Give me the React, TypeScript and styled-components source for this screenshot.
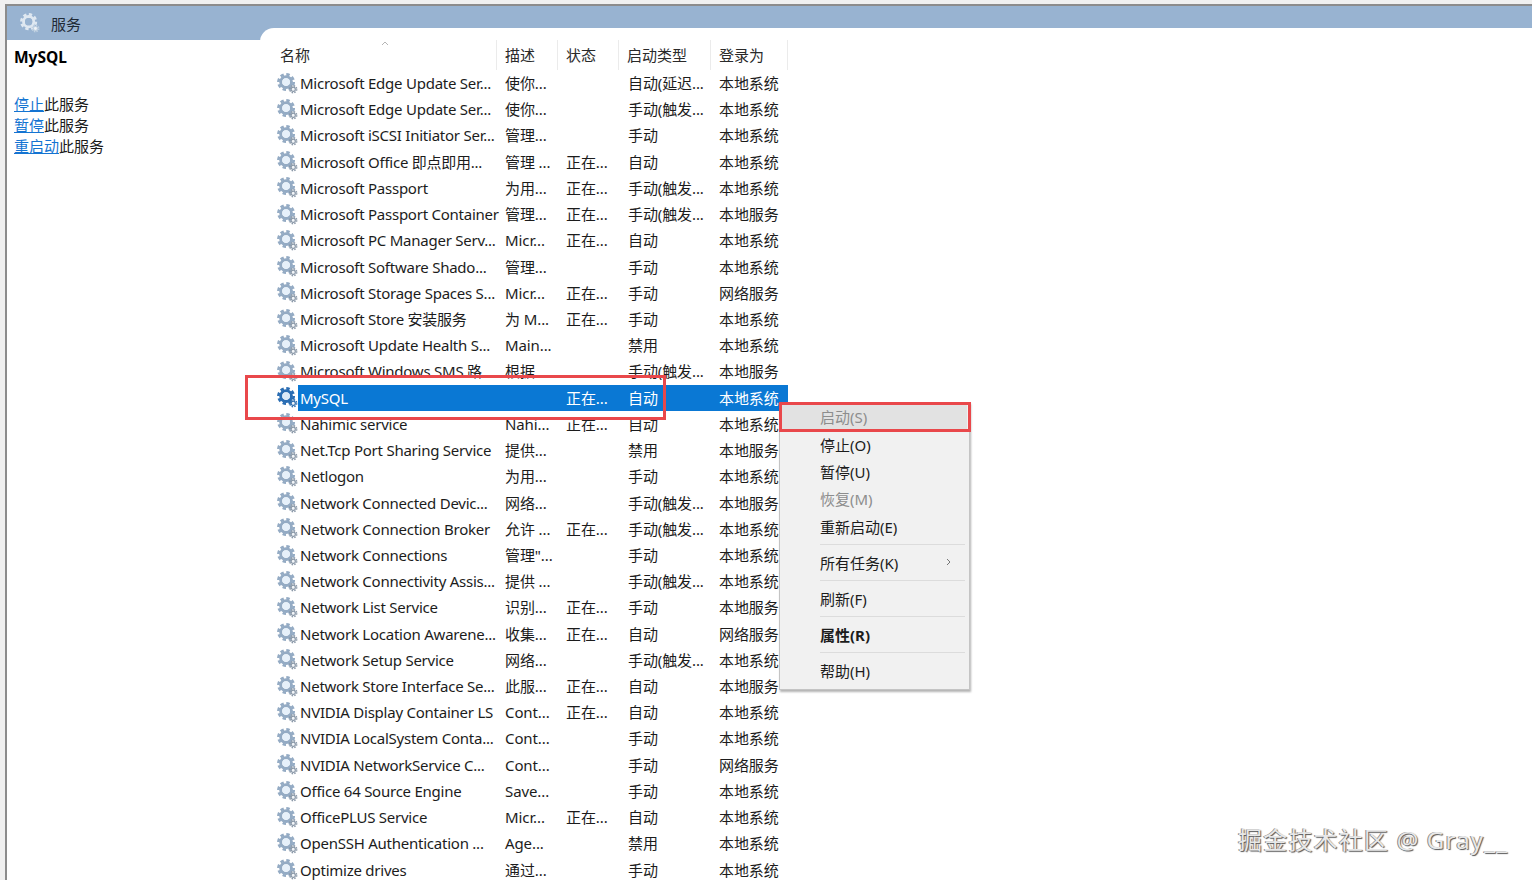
import React, { FC } from 'react';
import styled, { createGlobalStyle } from 'styled-components';

const GlobalStyle = createGlobalStyle`
  html, body {
    margin: 0;
    height: 100%;
    overflow: hidden;
    background: #f0f0f0;
    font-family: "Noto Sans", "Noto Sans CJK SC", sans-serif;
  }
`;

const Page = styled.div`
  position: relative;
  width: 1532px;
  height: 880px;
  overflow: hidden;
  padding: 4px 0 0 5px;
  box-sizing: border-box;
`;

const Win = styled.div`
  height: 876px;
  border-top: 2px solid #8c8c8c;
  border-left: 2px solid #8c8c8c;
  background: #fff;
  box-sizing: border-box;
`;

const TitleBar = styled.div`
  display: flex;
  align-items: center;
  height: 34px;
  padding: 0 0 0 13px;
  gap: 11px;
  background: #98b3d1;
  color: #1f2a36;
  font-size: 15px;
`;

const Body = styled.div`
  display: flex;
`;

const Sidebar = styled.div`
  width: 253px;
  flex: none;
  padding: 6px 0 0 7px;
  box-sizing: border-box;
  color: #1a1a1a;
`;

const ServiceName = styled.div`
  font-size: 15.5px;
  font-weight: 700;
  line-height: 22px;
  color: #000;
  margin-bottom: 26px;
`;

const ActionLine = styled.div`
  font-size: 15px;
  line-height: 21px;
`;

const ActionLink = styled.a`
  color: #1474d2;
  text-decoration: underline;
`;

const Panel = styled.div`
  flex: 1;
  margin-top: -12px;
  padding: 12px 0 0 17px;
  background: #fff;
  border-top-left-radius: 14px;
  position: relative;
`;

const COLUMNS = '220px 61px 61px 92px 77px';

const HeaderRow = styled.div`
  display: grid;
  grid-template-columns: ${COLUMNS};
  width: 511px;
  height: 30px;
`;

const HeaderCell = styled.div<{ $pad: number }>`
  position: relative;
  padding-left: ${p => p.$pad}px;
  border-right: 1px solid #ebebeb;
  font-size: 15px;
  line-height: 30px;
  color: #2a2a2a;
`;

const SortArrow = styled.svg`
  position: absolute;
  left: 104px;
  top: 1px;
`;

const Row = styled.div`
  display: grid;
  grid-template-columns: ${COLUMNS};
  width: 511px;
  height: 26.23px;
  font-size: 15px;
  line-height: 26.1px;
  color: #1c1c1c;
  white-space: nowrap;
`;

const NameCell = styled.div`
  display: flex;
  align-items: center;
  min-width: 0;
`;

const NameText = styled.div<{ $selected: boolean }>`
  flex: 1;
  min-width: 0;
  height: 100%;
  padding-left: 2px;
  letter-spacing: -0.24px;
  background: ${p => (p.$selected ? '#0a78d4' : 'transparent')};
  color: ${p => (p.$selected ? '#fff' : 'inherit')};
`;

const Cell = styled.div<{ $selected: boolean; $pad: number }>`
  padding-left: ${p => p.$pad}px;
  letter-spacing: -0.1px;
  background: ${p => (p.$selected ? '#0a78d4' : 'transparent')};
  color: ${p => (p.$selected ? '#fff' : 'inherit')};
`;

const RedBox = styled.div<{ $left: number; $top: number; $w: number; $h: number }>`
  position: absolute;
  left: ${p => p.$left}px;
  top: ${p => p.$top}px;
  width: ${p => p.$w}px;
  height: ${p => p.$h}px;
  border: 3px solid #e9484b;
  box-sizing: border-box;
  z-index: 3;
`;

const Menu = styled.div`
  position: absolute;
  left: 779px;
  top: 402px;
  width: 191px;
  height: 288px;
  padding: 0 2px;
  box-sizing: border-box;
  background: #f1f1f1;
  border: 1px solid #c4c4c4;
  box-shadow: 1px 2px 2px rgba(0, 0, 0, 0.3);
  z-index: 2;
`;

const MenuItem = styled.div<{ $disabled?: boolean; $active?: boolean; $bold?: boolean }>`
  display: flex;
  align-items: center;
  justify-content: space-between;
  height: 27.4px;
  padding: 0 16px 0 38px;
  font-size: 15px;
  font-weight: ${p => (p.$bold ? 700 : 400)};
  color: ${p => (p.$disabled ? '#8d8d8d' : '#1c1c1c')};
  background: ${p => (p.$active ? '#e2e2e2' : 'transparent')};
`;

const MenuSep = styled.div`
  height: 1px;
  margin: 4px 2px 3.7px 38px;
  background: #dcdcdc;
`;

const Chevron = styled.svg`
  flex: none;
`;

const Watermark = styled.div`
  position: absolute;
  right: 24px;
  bottom: 24px;
  font-size: 24px;
  line-height: 32px;
  letter-spacing: 1.2px;
  color: #e8e8e8;
  text-shadow: 1px 1px 1px #555, -1px 0 0 #8a8a8a;
  z-index: 4;
  white-space: nowrap;
`;

const GearSvg = styled.svg`
  flex: none;
`;

const Gear: FC<{ tone: 'normal' | 'selected' | 'title'; size: number }> = ({ tone, size }) => {
  const main = tone === 'selected' ? '#2a6db3' : tone === 'title' ? '#dfe8f1' : '#94abc4';
  const small = tone === 'selected' ? '#2f6fae' : tone === 'title' ? '#c2d2e2' : '#8a98a8';
  const hole = tone === 'selected' ? '#dbe9f7' : tone === 'title' ? '#98b3d1' : '#e6f0fa';
  return (
    <GearSvg width={size} height={size} viewBox="0 0 22 22">
      <circle cx="9.5" cy="9.5" r="8" fill="none" stroke={main} strokeWidth="2.8" strokeDasharray="3.6 2.68" />
      <circle cx="9.5" cy="9.5" r="5.6" fill="none" stroke={main} strokeWidth="3.2" />
      <circle cx="9.5" cy="9.5" r="4" fill={hole} />
      <circle cx="17" cy="17" r="3.6" fill="none" stroke={small} strokeWidth="1.6" strokeDasharray="1.6 1.23" />
      <circle cx="17" cy="17" r="2.2" fill="#f2f5f8" stroke={small} strokeWidth="1.2" />
    </GearSvg>
  );
};

type Service = [string, string, string, string, string];

const services: Service[] = [
  ['Microsoft Edge Update Ser...', '使你...', '', '自动(延迟...', '本地系统'],
  ['Microsoft Edge Update Ser...', '使你...', '', '手动(触发...', '本地系统'],
  ['Microsoft iSCSI Initiator Ser...', '管理...', '', '手动', '本地系统'],
  ['Microsoft Office 即点即用...', '管理 ...', '正在...', '自动', '本地系统'],
  ['Microsoft Passport', '为用...', '正在...', '手动(触发...', '本地系统'],
  ['Microsoft Passport Container', '管理...', '正在...', '手动(触发...', '本地服务'],
  ['Microsoft PC Manager Serv...', 'Micr...', '正在...', '自动', '本地系统'],
  ['Microsoft Software Shado...', '管理...', '', '手动', '本地系统'],
  ['Microsoft Storage Spaces S...', 'Micr...', '正在...', '手动', '网络服务'],
  ['Microsoft Store 安装服务', '为 M...', '正在...', '手动', '本地系统'],
  ['Microsoft Update Health S...', 'Main...', '', '禁用', '本地系统'],
  ['Microsoft Windows SMS 路...', '根据...', '', '手动(触发...', '本地服务'],
  ['MySQL', '', '正在...', '自动', '本地系统'],
  ['Nahimic service', 'Nahi...', '正在...', '自动', '本地系统'],
  ['Net.Tcp Port Sharing Service', '提供...', '', '禁用', '本地服务'],
  ['Netlogon', '为用...', '', '手动', '本地系统'],
  ['Network Connected Devic...', '网络...', '', '手动(触发...', '本地服务'],
  ['Network Connection Broker', '允许 ...', '正在...', '手动(触发...', '本地系统'],
  ['Network Connections', '管理"...', '', '手动', '本地系统'],
  ['Network Connectivity Assis...', '提供 ...', '', '手动(触发...', '本地系统'],
  ['Network List Service', '识别...', '正在...', '手动', '本地服务'],
  ['Network Location Awarene...', '收集...', '正在...', '自动', '网络服务'],
  ['Network Setup Service', '网络...', '', '手动(触发...', '本地系统'],
  ['Network Store Interface Se...', '此服...', '正在...', '自动', '本地服务'],
  ['NVIDIA Display Container LS', 'Cont...', '正在...', '自动', '本地系统'],
  ['NVIDIA LocalSystem Conta...', 'Cont...', '', '手动', '本地系统'],
  ['NVIDIA NetworkService C...', 'Cont...', '', '手动', '网络服务'],
  ['Office 64 Source Engine', 'Save...', '', '手动', '本地系统'],
  ['OfficePLUS Service', 'Micr...', '正在...', '自动', '本地系统'],
  ['OpenSSH Authentication ...', 'Age...', '', '禁用', '本地系统'],
  ['Optimize drives', '通过...', '', '手动', '本地系统'],
];

const App: FC = () => (
  <Page>
    <GlobalStyle />
    <Win>
      <TitleBar>
        <Gear tone="title" size={20} />
        <span>服务</span>
      </TitleBar>
      <Body>
        <Sidebar>
          <ServiceName>MySQL</ServiceName>
          <ActionLine><ActionLink>停止</ActionLink>此服务</ActionLine>
          <ActionLine><ActionLink>暂停</ActionLink>此服务</ActionLine>
          <ActionLine><ActionLink>重启动</ActionLink>此服务</ActionLine>
        </Sidebar>
        <Panel>
          <HeaderRow>
            <HeaderCell $pad={3}>
              名称
              <SortArrow width="8" height="5" viewBox="0 0 8 5">
                <path d="M1 4 L4 1 L7 4" fill="none" stroke="#b5b5b5" strokeWidth="1" />
              </SortArrow>
            </HeaderCell>
            <HeaderCell $pad={8}>描述</HeaderCell>
            <HeaderCell $pad={8}>状态</HeaderCell>
            <HeaderCell $pad={8}>启动类型</HeaderCell>
            <HeaderCell $pad={8}>登录为</HeaderCell>
          </HeaderRow>
          {services.map((s, i) => {
            const selected = s[0] === 'MySQL';
            return (
              <Row key={i}>
                <NameCell>
                  <Gear tone={selected ? 'selected' : 'normal'} size={21} />
                  <NameText $selected={selected}>{s[0]}</NameText>
                </NameCell>
                <Cell $selected={selected} $pad={8}>{s[1]}</Cell>
                <Cell $selected={selected} $pad={8}>{s[2]}</Cell>
                <Cell $selected={selected} $pad={9}>{s[3]}</Cell>
                <Cell $selected={selected} $pad={8}>{s[4]}</Cell>
              </Row>
            );
          })}
        </Panel>
      </Body>
    </Win>
    <RedBox $left={245} $top={375} $w={421} $h={45} />
    <RedBox $left={779} $top={402} $w={192} $h={30} />
    <Menu>
      <MenuItem $disabled $active>启动(S)</MenuItem>
      <MenuItem>停止(O)</MenuItem>
      <MenuItem>暂停(U)</MenuItem>
      <MenuItem $disabled>恢复(M)</MenuItem>
      <MenuItem>重新启动(E)</MenuItem>
      <MenuSep />
      <MenuItem>
        所有任务(K)
        <Chevron width="5" height="8" viewBox="0 0 5 8">
          <path d="M1 1 L4 4 L1 7" fill="none" stroke="#777" strokeWidth="1" />
        </Chevron>
      </MenuItem>
      <MenuSep />
      <MenuItem>刷新(F)</MenuItem>
      <MenuSep />
      <MenuItem $bold>属性(R)</MenuItem>
      <MenuSep />
      <MenuItem>帮助(H)</MenuItem>
    </Menu>
    <Watermark>掘金技术社区 @ Gray__</Watermark>
  </Page>
);

export default App;
